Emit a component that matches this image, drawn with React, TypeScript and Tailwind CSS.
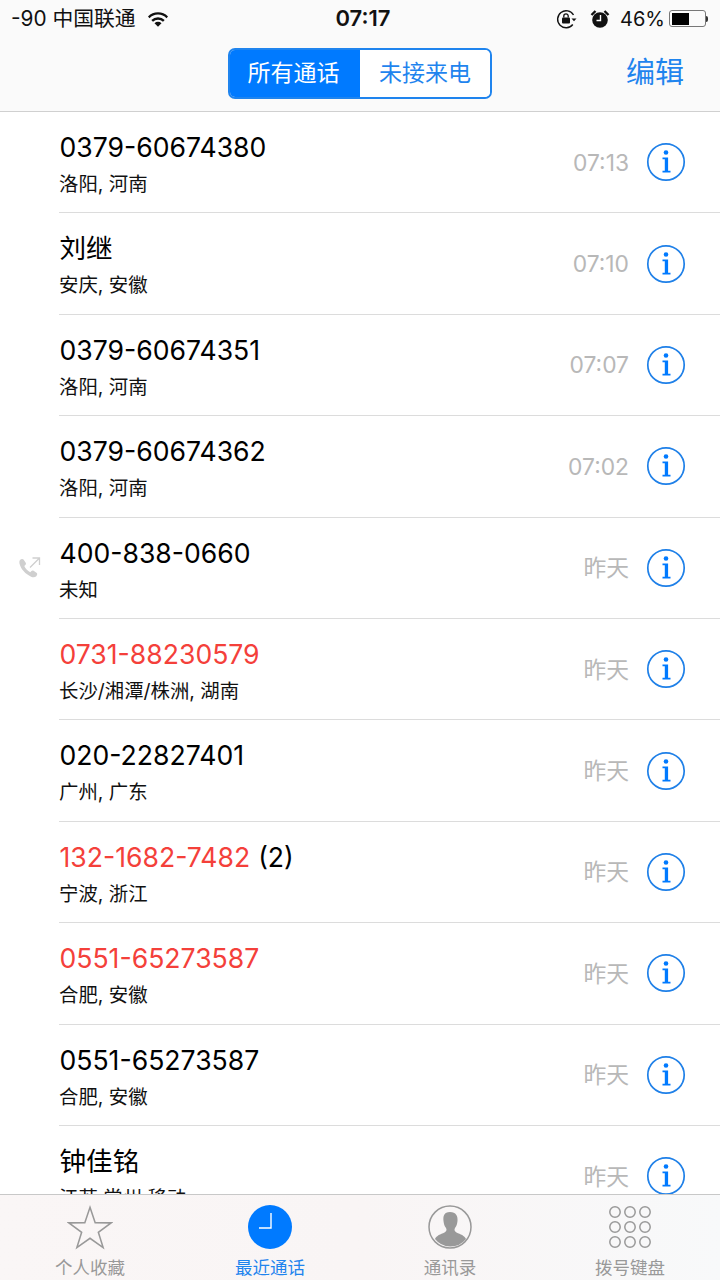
const calls = [
  { name: "0379-60674380", sub: "洛阳, 河南", time: "07:13" },
  { name: "刘继", sub: "安庆, 安徽", time: "07:10" },
  { name: "0379-60674351", sub: "洛阳, 河南", time: "07:07" },
  { name: "0379-60674362", sub: "洛阳, 河南", time: "07:02" },
  { name: "400-838-0660", sub: "未知", time: "昨天", outgoing: true },
  { name: "0731-88230579", sub: "长沙/湘潭/株洲, 湖南", time: "昨天", missed: true },
  { name: "020-22827401", sub: "广州, 广东", time: "昨天" },
  { name: "132-1682-7482", count: "(2)", sub: "宁波, 浙江", time: "昨天", missed: true },
  { name: "0551-65273587", sub: "合肥, 安徽", time: "昨天", missed: true },
  { name: "0551-65273587", sub: "合肥, 安徽", time: "昨天" },
  { name: "钟佳铭", sub: "江苏 常州 移动", time: "昨天" },
];

function InfoIcon() {
  return (
    <svg width="40" height="40" viewBox="0 0 40 40" className="shrink-0">
      <circle cx="20" cy="20" r="18.2" fill="none" stroke="#1f80e8" strokeWidth="1.7" />
      <circle cx="20" cy="10.5" r="2.3" fill="#007aff" />
      <path d="M16.5 15.5h5.600v13.300h2.400v1.700h-8v-1.700h2.300v-11.600h-2.300z" fill="#007aff" />
    </svg>
  );
}

function OutgoingIcon() {
  return (
    <svg width="26" height="26" viewBox="0 0 26 26">
      <path
        d="M3 5c1.200-1.200 2.600-1.500 3.500-.5l2.200 3.200c.5.800.3 1.600-.4 2.300l-1 1c.8 2 3.400 5 6 6.200l1.100-1.100c.7-.7 1.500-.8 2.200-.3l3.200 2.300c.8.700.4 2.100-.5 3.100-1.300 1.300-3.200 1.400-5.200.5-5.600-2.500-10.100-7.500-11.400-12.400-.4-1.500-.6-3.300.3-4.300z"
        fill="#cfcfcf"
      />
      <path d="M13 12.500 22.500 3M15.500 3h7V10" fill="none" stroke="#cfcfcf" strokeWidth="1.300" />
    </svg>
  );
}

function Row({ call }: { call: (typeof calls)[number] }) {
  return (
    <div className="flex h-[101.4px] shrink-0">
      <div className="flex w-[59px] shrink-0 items-center pl-[17px]">
        {call.outgoing && <OutgoingIcon />}
      </div>
      <div className="flex min-w-0 flex-1 items-center border-b border-[#dcdcdc] pr-[34px]">
        <div className="flex-1 self-start pt-[17px]">
          <div className="flex h-[36px] items-center gap-[8px] pl-[0.5px] text-[26.600px] leading-[36px] text-black">
            <span className={call.missed ? "text-[#f4403a]" : ""}>{call.name}</span>
            {call.count && <span>{call.count}</span>}
          </div>
          <div className="mt-[4px] h-[30px] text-[19.400px] leading-[30px] text-[#111]">{call.sub}</div>
        </div>
        <div className="mr-[17px] pt-[1px] text-[22.800px] text-[#b8b8b8]">{call.time}</div>
        <InfoIcon />
      </div>
    </div>
  );
}

function StatusBar() {
  return (
    <div className="grid h-[37px] grid-cols-3 items-center px-[11px] text-[#111]">
      <div className="flex items-center text-[20.800px]">
        <span>-90 中国联通</span>
        <svg width="22" height="16" viewBox="0 0 22 16" className="ml-[11px]">
          <path d="M1 5.500a14 14 0 0 1 20 0l-1.500 1.700a11.800 11.800 0 0 0-17 0z" fill="#111" />
          <path d="M4.300 9a9.400 9.400 0 0 1 13.400 0L16 10.800a7 7 0 0 0-10 0z" fill="#111" />
          <path d="M7.500 12.300a4.900 4.900 0 0 1 7 0L11 15.800z" fill="#111" />
        </svg>
      </div>
      <div className="pl-[6px] text-center text-[22px] font-semibold">07:17</div>
      <div className="flex items-center justify-end gap-[4px] pr-[1px] text-[20px]">
        <svg width="22" height="20" viewBox="0 0 22 20" className="mr-[8px]">
          <path d="M16.800 15.500A8.500 8.500 0 1 1 17.500 6" fill="none" stroke="#111" strokeWidth="1.400" />
          <path d="M15.500 9.500h5l-2.500 2.800z" fill="#111" />
          <rect x="6" y="8.500" width="8" height="6" rx="1" fill="#111" />
          <path d="M7.800 8.500V7a2.200 2.200 0 0 1 4.400 0v1.500" fill="none" stroke="#111" strokeWidth="1.300" />
        </svg>
        <svg width="20" height="20" viewBox="0 0 20 20" className="mr-[6px]">
          <circle cx="10" cy="11" r="7.800" fill="#111" />
          <path d="M1.500 6 5.500 2M18.500 6l-4-4" stroke="#111" strokeWidth="2.400" />
          <path d="M10.500 6v5.500H6.500" fill="none" stroke="#fff" strokeWidth="1.400" />
        </svg>
        <span>46%</span>
        <div className="flex items-center">
          <div className="h-[17px] w-[37px] rounded-[3px] border border-[#777] p-[1.500px]">
            <div className="h-full w-[17px] bg-black" />
          </div>
          <div className="h-[6px] w-[2px] rounded-r-[2px] bg-[#333]" />
        </div>
      </div>
    </div>
  );
}

function Header() {
  return (
    <div className="relative flex h-[75px] items-start justify-end border-b border-[#d0d0d0] pr-[36px]">
      <div className="absolute left-[228px] top-[11px] flex h-[51px] w-[264px] overflow-hidden rounded-[7px] border-2 border-[#1f84ee] text-[23px]">
        <div className="flex w-[130px] items-center justify-center bg-[#007aff] pb-[1px] pr-[3px] text-white">所有通话</div>
        <div className="flex flex-1 items-center justify-center bg-white pb-[1px] text-[#1f84ee]">未接来电</div>
      </div>
      <div className="pt-[15px] text-[29px] leading-[42px] text-[#1f84ee]">编辑</div>
    </div>
  );
}

function TabBar() {
  return (
    <div className="grid h-[86px] shrink-0 grid-cols-4 border-t border-[#c8c8c8] bg-gradient-to-r from-[#faf6f6] via-[#f9f5f5] to-[#f8f9fa] text-[17.500px] leading-[24px]">
      <div className="flex flex-col items-center pt-[9px] text-[#999]">
        <svg width="46" height="46" viewBox="0 0 48 46">
          <path d="M24 2.500 29.400 18.600 46 18.700 32.700 28.500 37.700 44.500 24 34.800 10.300 44.500 15.300 28.500 2 18.700 18.600 18.600z" fill="none" stroke="#999" strokeWidth="1.600" />
        </svg>
        <span className="mt-[6px]">个人收藏</span>
      </div>
      <div className="flex flex-col items-center pt-[10px] text-[#1f84ee]">
        <svg width="44" height="44" viewBox="0 0 44 44">
          <circle cx="22" cy="22" r="22" fill="#007aff" />
          <path d="M23 8v15H11" fill="none" stroke="#fff" strokeWidth="1.400" />
        </svg>
        <span className="mt-[7px]">最近通话</span>
      </div>
      <div className="flex flex-col items-center pt-[10px] text-[#999]">
        <svg width="44" height="44" viewBox="0 0 44 44">
          <circle cx="22" cy="22" r="21" fill="none" stroke="#999" strokeWidth="1.500" />
          <path d="M22 7c6 0 8 4 7.500 9-.3 3-1 5-2.500 7-1 1.500-.5 3.500 1.500 4.500 4 1.800 8 3 9.500 6.500A20 20 0 0 1 22 41.500 20 20 0 0 1 7 34c1.500-3.500 5.500-4.700 9.500-6.500 2-1 2.500-3 1.500-4.500-1.500-2-2.200-4-2.500-7C15 11 16 7 22 7z" fill="#999" />
        </svg>
        <span className="mt-[7px]">通讯录</span>
      </div>
      <div className="flex flex-col items-center pt-[10px] text-[#999]">
        <svg width="44" height="44" viewBox="0 0 44 44">
          {[7, 22, 37].flatMap((y) =>
            [7, 22, 37].map((x) => (
              <circle key={`${x}-${y}`} cx={x} cy={y} r="5.200" fill="none" stroke="#999" strokeWidth="1.500" />
            )),
          )}
        </svg>
        <span className="mt-[7px]">拨号键盘</span>
      </div>
    </div>
  );
}

export default function App() {
  return (
    <div className="flex h-[1280px] w-[720px] flex-col overflow-hidden bg-white font-['Inter','Noto_Sans_CJK_SC',sans-serif]">
      <div className="shrink-0 bg-[#fafafa]">
        <StatusBar />
        <Header />
      </div>
      <div className="flex min-h-0 flex-1 flex-col overflow-hidden">
        {calls.map((call, i) => (
          <Row key={i} call={call} />
        ))}
      </div>
      <TabBar />
    </div>
  );
}
